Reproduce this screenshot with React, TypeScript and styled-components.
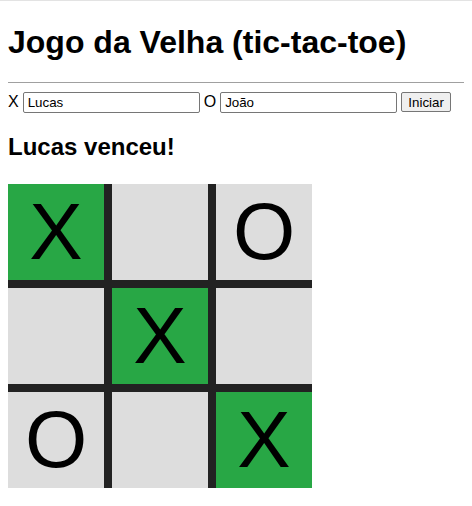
import React from "react";
import styled, { createGlobalStyle } from "styled-components";

const GlobalStyle = createGlobalStyle`
  html {
    border-top: 1px solid #e3e3e3;
  }
  body {
    margin: 8px;
    background: #fff;
    color: #000;
    font-family: "Liberation Sans", Arial, sans-serif;
    font-size: 16px;
  }
`;

const winningLine = [0, 4, 8];

const App = () => {
  const [playerX, setPlayerX] = React.useState("Lucas");
  const [playerO, setPlayerO] = React.useState("João");
  const [board] = React.useState(["X", "", "O", "", "X", "", "O", "", "X"]);

  return (
    <>
      <GlobalStyle />
      <Title>Jogo da Velha (tic-tac-toe)</Title>
      <Divider />
      <PlayersRow>
        <PlayerLabel>X</PlayerLabel>
        <NameInput value={playerX} onChange={(e) => setPlayerX(e.target.value)} />
        <PlayerLabel>O</PlayerLabel>
        <NameInput value={playerO} onChange={(e) => setPlayerO(e.target.value)} />
        <StartButton>Iniciar</StartButton>
      </PlayersRow>
      <Status>{playerX} venceu!</Status>
      <Board>
        {board.map((mark, i) => (
          <Cell key={i} $winner={winningLine.includes(i)}>
            {mark}
          </Cell>
        ))}
      </Board>
    </>
  );
};

const Title = styled.h1`
  font-size: 32px;
  font-weight: bold;
  margin: 14.5px 0 21.44px;
`;

const Divider = styled.hr`
  border: 0;
  border-top: 1px solid #a0a0a0;
  height: 0;
  margin: 8px 0 8px;
`;

const PlayersRow = styled.div`
  display: flex;
  align-items: baseline;
  gap: 4px;
  padding-top: 1px;
`;

const PlayerLabel = styled.span`
  font-size: 16px;
`;

const NameInput = styled.input`
  box-sizing: border-box;
  width: 177px;
  height: 21px;
  padding: 1px 4px;
  border: 1px solid #767676;
  border-radius: 2px;
  font-family: "Liberation Sans", Arial, sans-serif;
  font-size: 13.33px;
  color: #000;
  background: #fff;
`;

const StartButton = styled.button`
  box-sizing: border-box;
  width: 50px;
  height: 20px;
  padding: 0 6px;
  border: 1px solid #767676;
  border-radius: 2px;
  background: #efefef;
  font-family: "Liberation Sans", Arial, sans-serif;
  font-size: 13.33px;
  color: #000;
`;

const Status = styled.h2`
  font-size: 24px;
  font-weight: bold;
  margin: 20px 0 23px;
`;

const Board = styled.div`
  display: grid;
  grid-template-columns: repeat(3, 96px);
  grid-template-rows: repeat(3, 96px);
  gap: 8px;
  width: 304px;
  background: #222;
`;

const Cell = styled.div<{ $winner: boolean }>`
  background: ${({ $winner }) => ($winner ? "#28a745" : "#ddd")};
  font-size: 80px;
  line-height: 96px;
  text-align: center;
  color: #000;
`;

export default App;
